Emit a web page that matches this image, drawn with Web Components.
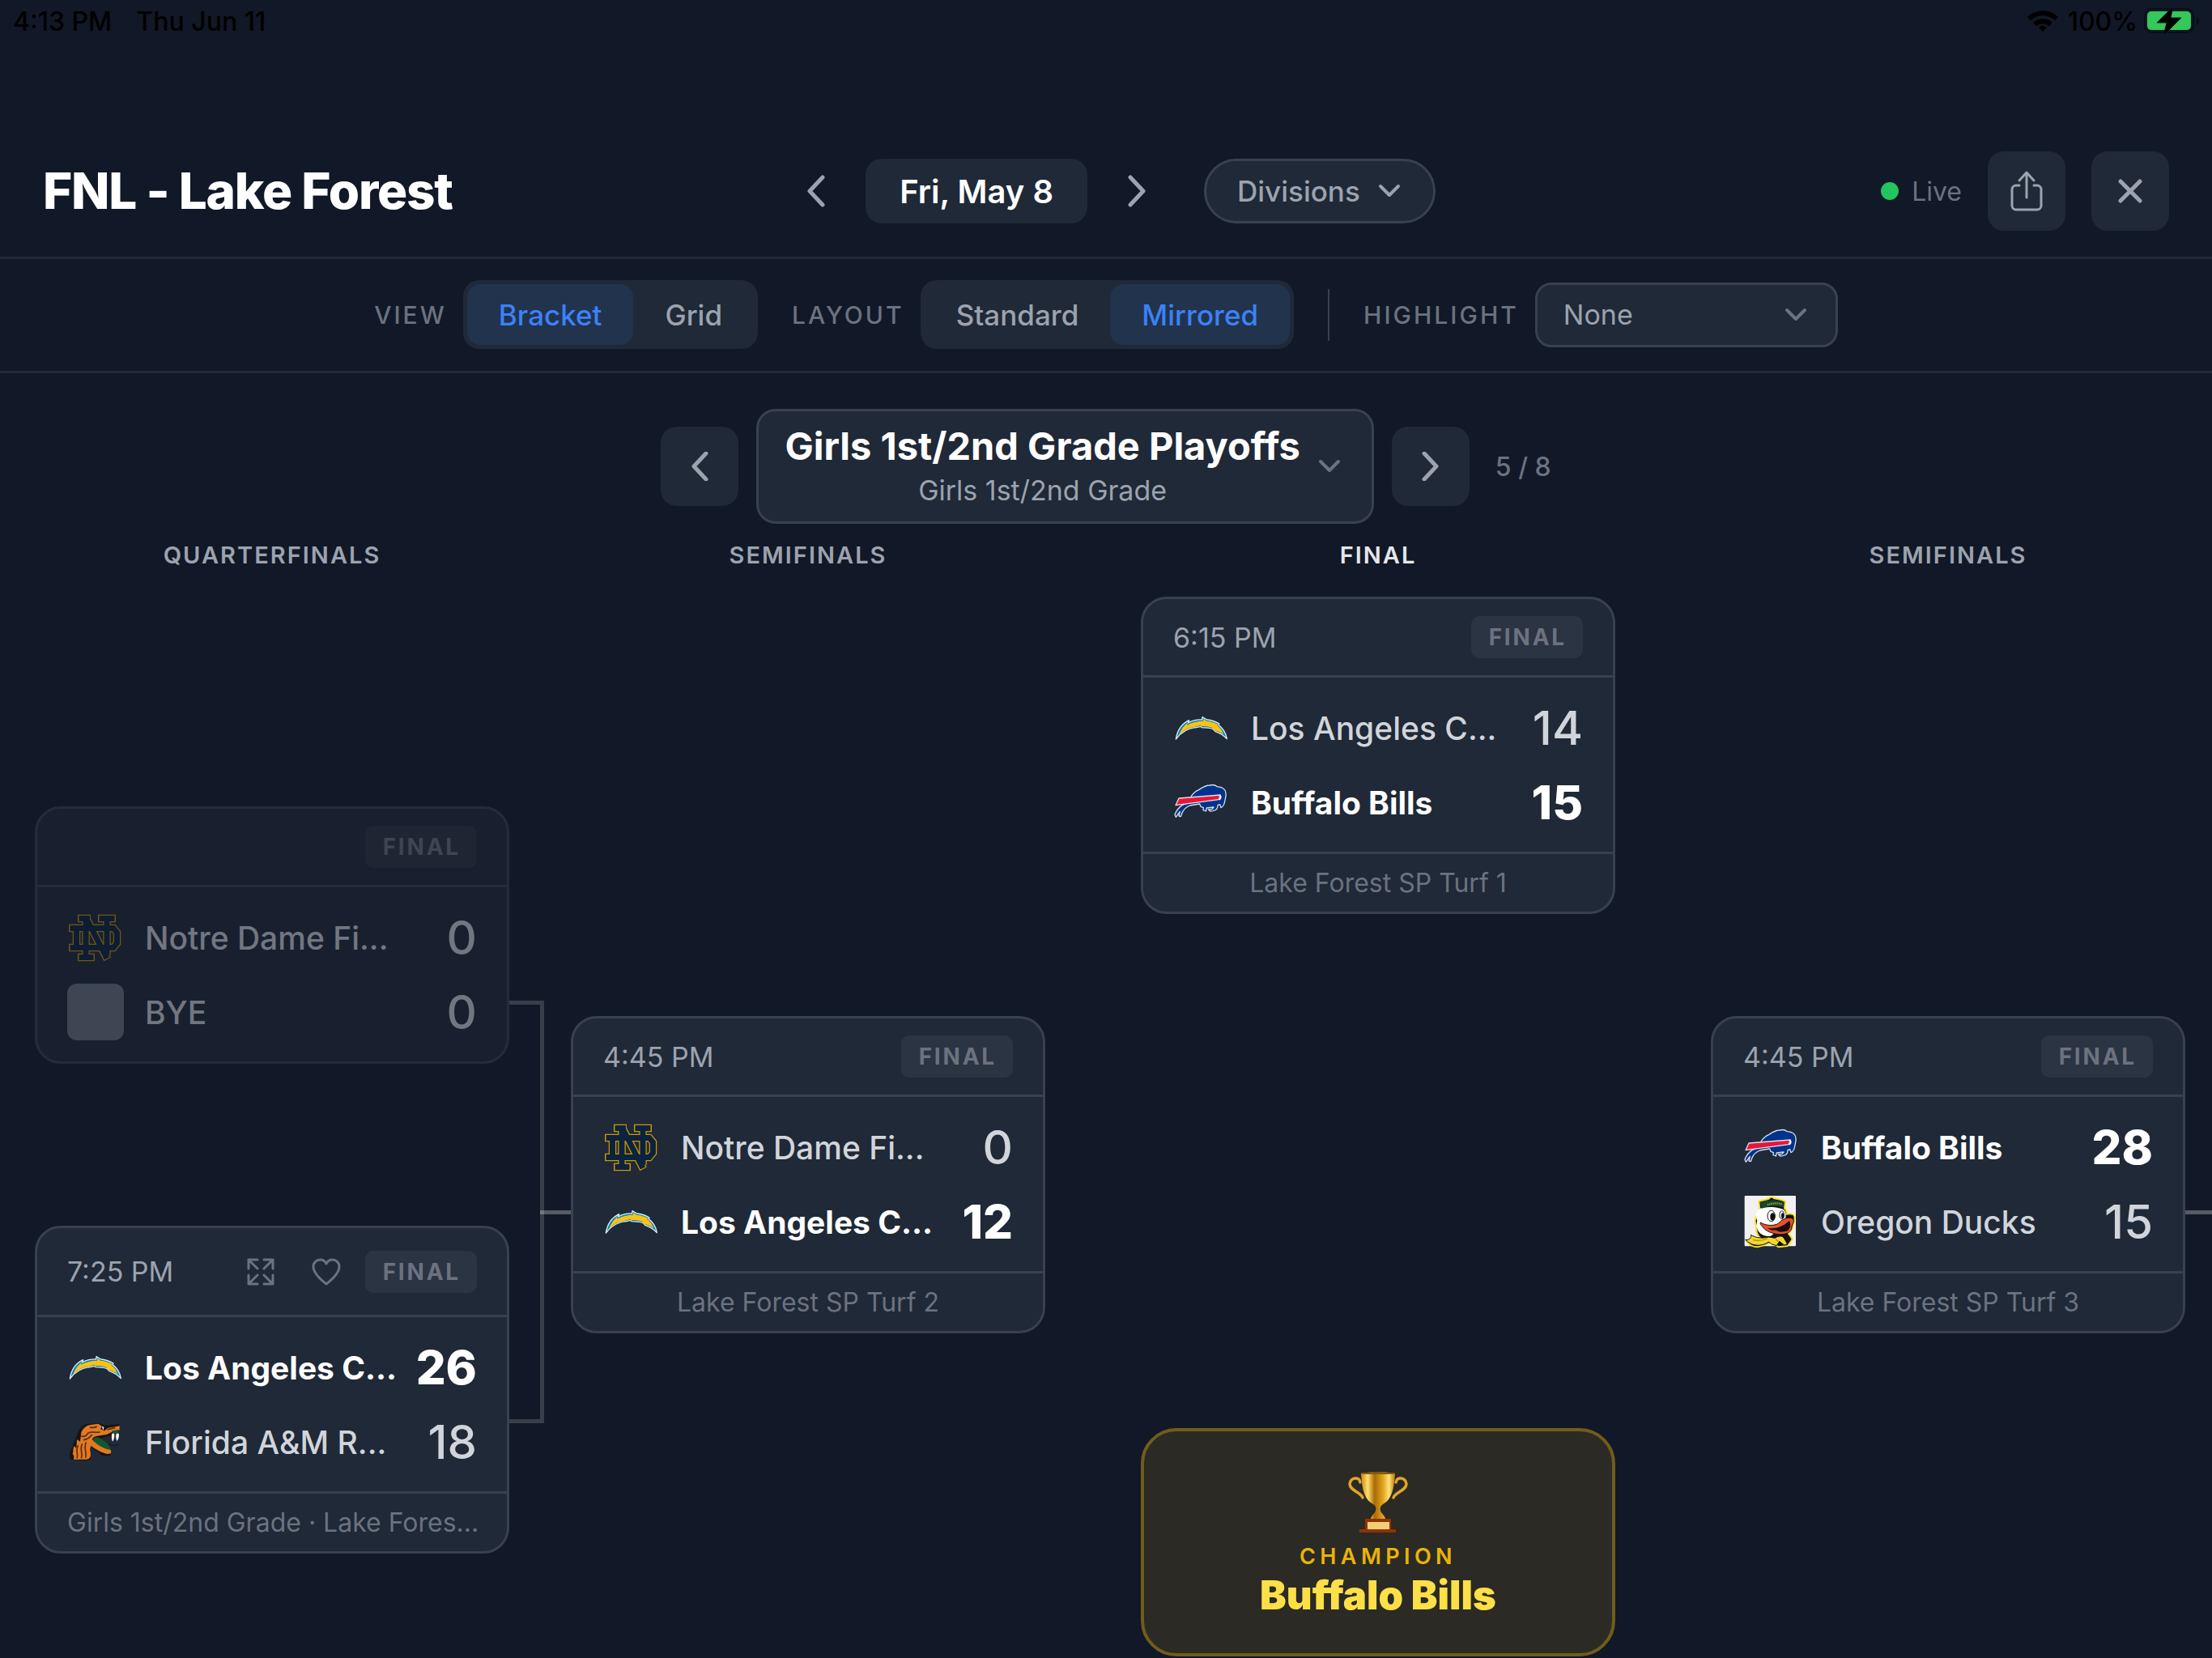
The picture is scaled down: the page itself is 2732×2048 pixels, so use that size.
<!DOCTYPE html>
<html lang="en">
<head>
<meta charset="utf-8">
<title>FNL - Lake Forest</title>
<style>
  body {
    margin: 0;
    background: #111827;
    color: #fff;
    font-family: Inter, "Liberation Sans", sans-serif;
    overflow-x: hidden;
  }
</style>
</head>
<body>
<score-board></score-board>

<script>
const icons = {
  left: `<svg viewBox="0 0 24 40" width="24" height="40"><path d="M20 3 4 20l16 17" stroke-width="5"/></svg>`,
  right: `<svg viewBox="0 0 24 40" width="24" height="40"><path d="m4 3 16 17L4 37" stroke-width="5"/></svg>`,
  leftSmall: `<svg viewBox="0 0 24 36" width="24" height="36"><path d="M20 2 5 18l15 16" stroke-width="5"/></svg>`,
  rightSmall: `<svg viewBox="0 0 24 36" width="24" height="36"><path d="m4 2 15 16L4 34" stroke-width="5"/></svg>`,
  down: `<svg viewBox="0 0 28 18" width="28" height="18"><path d="m3 3 11 11L25 3" stroke-width="4"/></svg>`,
  share: `<svg viewBox="0 0 40 50" width="40" height="50"><path d="M20 33V3M11 12l9-10 9 10M11 18H7a5 5 0 0 0-5 5v20a5 5 0 0 0 5 5h26a5 5 0 0 0 5-5V23a5 5 0 0 0-5-5h-4" stroke-width="3"/></svg>`,
  close: `<svg viewBox="0 0 30 30" width="30" height="30"><path d="m3 3 24 24M27 3 3 27" stroke-width="5"/></svg>`,
  expand: `<svg viewBox="0 0 34 34" width="34" height="34"><path d="M2 13V2h11M2 2l11 11M21 2h11v11M32 2 21 13M2 21v11h11M2 32l11-11M32 21v11H21M32 32 21 21" stroke-width="3"/></svg>`,
  heart: `<svg viewBox="0 0 36 34" width="36" height="34"><path d="M18 32C9 25 2 18 2 10.500 2 5.500 6 2 10.500 2c3 0 6 2 7.500 5 1.500-3 4.500-5 7.500-5C30 2 34 5.500 34 10.500 34 18 27 25 18 32z" stroke-width="3"/></svg>`,
};

const logos = {
  chargers: `<svg viewBox="0 0 210 210" width="70" height="70">
    <path d="M10 147C15 114 31 90 59 77l-4 10c16-9 32-13 52-12l1-10 17 10c18 1 32 7 46 15l-3 5c17 12 27 28 31 51-12-13-26-22-44-28l-7-8c-14-5-26-6-43-6l-3-4c-12 2-19 6-21 4-28 3-51 17-71 43z" fill="#0080c6" stroke="#dfe9ef" stroke-width="4" stroke-linejoin="round"/>
    <path d="M20 134C28 112 40 96 53 86l-2 9C70 84 90 80 111 80l2-9 10 9c18 1 30 6 44 13l-4 4c12 9 19 19 24 33-11-9-22-13-36-17l-5-8c-14-5-27-6-42-6l-2-4-20 6C60 103 38 112 20 134z" fill="#ffc20e"/></svg>`,
  bills: `<svg viewBox="0 0 210 210" width="70" height="70">
    <path d="M66 84c8-12 16-20 29-25 14-10 24-17 40-17 12-3 20-2 28 5 17 1 30 8 32 24 2 12-3 22-4 31-2 12-7 20-14 23l-4-12-8 3c1 12-5 19-18 21l-10 1-7-6 14-2 6-7-26 3-3 12-10-4 1-9-10-4-4-10-36 6c-13 5-22 13-28 25l-6 16-7-2 4-17-15 21-4-9c5-15 13-26 28-36l22-8z" fill="#00338d" stroke="#d8dde6" stroke-width="4" stroke-linejoin="round"/>
    <path d="M21 90 174 78l-5 17L9 116z" fill="#e31837" stroke="#e6dfe9" stroke-width="4" stroke-linejoin="round"/>
    <path d="M172 79c7 3 5 11-1 17" fill="none" stroke="#fff" stroke-width="5"/></svg>`,
  irish: `<svg viewBox="-3 -7 70 70" width="70" height="70" fill="none">
    <g stroke="#c99700" stroke-width="9.500"><path d="M10 4.500H26M20 2V55M10 52.500H31M19.500 2 46.500 55M46 2V50M35 4.500H57M-1 16.500H54L58.500 22V35L54 40.500H-1M8.500 16V41"/></g>
    <g stroke="#0c2340" stroke-width="7"><path d="M11.500 4.500H25M20 2V54M11.500 52.500H29.500M20 3 46 54M46 2V50M36.500 4.500H55.500M.5 16.500H54L58.500 22V35L54 40.500H.5M8.500 16V41"/></g></svg>`,
  rattlers: `<svg viewBox="0 0 210 210" width="70" height="70">
    <path d="M10 170c-2-16 0-34 10-48l14-36c4-16 14-36 34-46l50-4 22 8 54-4v24l-34 18-60 16 66 46-6 12-30 0-44-36 2 50-24 4z" fill="#191310"/>
    <path d="M20 150c4-10 0-20 6-30l8 10 2-34 12 8 4-34c6-14 18-26 34-28l28-4 14 8-4 12 14 6 12-10 44-8v16l-18 2-30 14-38 6c-12 4-16 8-14 14l68 38 1 12-12 2c-24-4-44-16-62-30-10 14 2 26-4 42-6 10-18 8-30 8H24c0-8 4-12-4-20z" fill="#e07a23"/>
    <path d="M36 166c6-16-6-28 4-48M52 166c8-20-8-32 4-54M68 164c6-20-8-34 2-58M52 84c14 4 20-4 26-12 16-8 26 2 44-4M60 98c16-2 24-8 32-20M84 50c8 4 18 2 26-2M148 60l30-8" fill="none" stroke="#5b2c10" stroke-width="5"/>
    <path d="M94 98c10-16 24-10 34-2 14 10 30 16 32 38-22-2-50-18-66-36zM166 64l24-4v14l-22 2z" fill="#14572f"/>
    <path d="M166 74h8c2 12 0 22-6 30-4-10-4-20-2-30zM182 74h9c2 12-1 22-7 28-4-10-4-18-2-28zM128 48l8 2-2 12z" fill="#fff"/>
    <path d="M150 112c14 8 26 8 40 2" fill="none" stroke="#191310" stroke-width="3"/></svg>`,
  ducks: `<svg viewBox="0 0 210 210" width="70" height="70">
    <rect x="5" y="9" width="190" height="187" rx="3" fill="#f1f1f1"/>
    <path d="M58 30c16-6 28-6 38-10 2-6 14-8 18-1 12 2 30 4 42 12l-3 24c8 6 9 13 8 22 14-2 26-2 29 8 3 12-1 22-5 30 0 16-6 26-18 32 3 8 10 10 15 24l-17 24-34 4-25-16-52 16c-20 0-32-8-41-22 14 2 20-2 14-14 16 8 22 8 36 2-14-12-16-26-14-42-10-22-4-40 14-48z" fill="#111" stroke="#f7e11e" stroke-width="6" stroke-linejoin="round"/>
    <path d="M60 58c20-10 70-10 92 4 8 12 6 24 4 38-10 16-36 48-54 58-24 4-46-8-52-32-2-10 0-16 2-24-8-18-4-34 8-44z" fill="#fff"/>
    <path d="M62 33c28-10 60-10 89 0l-3 19c-25-8-51-6-79 4z" fill="#154733"/>
    <path d="M90 42c16-5 36-6 54-2" fill="none" stroke="#b8a832" stroke-width="6" stroke-dasharray="4 3"/>
    <ellipse cx="104" cy="84" rx="14" ry="20" fill="#fff" stroke="#111" stroke-width="3"/>
    <ellipse cx="109" cy="87" rx="9" ry="14" fill="#111"/>
    <ellipse cx="143" cy="80" rx="8" ry="15" fill="#fff" stroke="#111" stroke-width="3"/>
    <ellipse cx="146" cy="83" rx="5" ry="10" fill="#111"/>
    <path d="M64 108c18 12 48 14 66 4 18-22 46-26 56-16 4 12-4 18-6 28 0 20-20 28-40 28-28 0-56-10-70-30-4-4-8-8-6-14z" fill="#e8502a" stroke="#111" stroke-width="3"/>
    <path d="M88 128c30 6 60-4 82-26 8 8 6 26-4 36-22 10-58 4-78-10z" fill="#1a0b08"/>
    <path d="M104 138c14-6 24 0 32 6-12 2-22-2-32-6z" fill="#d2402a"/>
    <path d="M8 172c18 2 24-10 20-18 20 12 44 14 66 8l24 4c12-8 24-10 32-2l14 24-12 4-18-14-10 16-20-6-8-8c-28 18-64 18-88-8z" fill="#f3d72c" stroke="#111" stroke-width="3" stroke-linejoin="round"/>
    <path d="M36 172c18 6 38 2 54-4M120 170l10 8" fill="none" stroke="#a58d12" stroke-width="4"/></svg>`,
  none: `<svg viewBox="0 0 70 70" width="70" height="70"><rect width="70" height="70" rx="12" fill="#6b7280"/></svg>`,
};

const base = `
  *, *::before, *::after { box-sizing: border-box; }
  button, select { font: inherit; color: inherit; border: 0; margin: 0; padding: 0; background: none; }
  svg { display: block; flex: none; }
  .icon svg { fill: none; stroke: currentColor; stroke-linecap: round; stroke-linejoin: round; }
`;

class BaseElement extends HTMLElement {
  constructor() {
    super();
    this.attachShadow({ mode: "open" });
  }

  connectedCallback() {
    this.shadowRoot.innerHTML = `<style>${base}${this.styles()}</style>${this.render()}`;
  }

  attr(name) {
    return this.getAttribute(name) || "";
  }
}

customElements.define("status-bar", class extends BaseElement {
  styles() {
    return `
      :host { display: flex; align-items: center; height: 52px; padding: 0 14px 0 16px; color: #000; font-size: 32px; font-weight: 500; }
      .date { margin-left: 30px; }
      .wifi { margin: 0 12px 0 auto; }
      .battery { margin-left: 8px; }
    `;
  }

  render() {
    return `
      <span>4:13 PM</span><span class="date">Thu Jun 11</span>
      <svg class="wifi" viewBox="0 0 38 28" width="38" height="28" fill="none" stroke="#000" stroke-width="6">
        <path d="M2 11c10-9 24-9 34 0M9 18c6-5 14-5 20 0"/><path d="m19 27-5-5c3-3 7-3 10 0z" fill="#000" stroke="none"/></svg>
      <span>100%</span>
      <svg class="battery" viewBox="0 0 70 34" width="70" height="34">
        <rect x="1" y="2" width="60" height="29" rx="9" fill="none" stroke="#0a0e17" stroke-width="2"/>
        <path d="M65 12c4 2 4 8 0 10z" fill="#0a0e17"/>
        <rect x="4" y="5" width="54" height="23" rx="5" fill="#34c759"/>
        <path d="M36-1 16 19h12l-4 16 22-22H33z" fill="#000" stroke="#111827" stroke-width="1"/></svg>
    `;
  }
});

customElements.define("board-header", class extends BaseElement {
  styles() {
    return `
      :host {
        display: grid; grid-template-columns: 1fr auto 1fr; align-items: center;
        padding: 135px 53px 32px; border-bottom: 3px solid #1f2937;
      }
      h1 { margin: 0; font-size: 62px; line-height: 72px; font-weight: 800; letter-spacing: -0.02em; }
      nav, .tools { display: flex; align-items: center; color: #9ca3af; }
      nav { gap: 12px; }
      .tools { gap: 32px; justify-content: flex-end; }
      .step { width: 98px; height: 80px; display: grid; place-items: center; }
      .date { height: 80px; padding: 0 42px; border-radius: 20px; background: #1f2937; color: #fff; font-size: 40px; font-weight: 600; }
      .divisions {
        display: flex; align-items: center; gap: 22px; height: 80px; margin-left: 22px; padding: 0 40px 0 38px;
        border: 3px solid #374151; border-radius: 40px; background: #1f2937; font-size: 35px; font-weight: 500;
      }
      .live { display: flex; align-items: center; gap: 16px; color: #6b7280; font-size: 32px; }
      .live::before { content: ""; width: 22px; height: 22px; border-radius: 50%; background: #22c55e; }
      .tool { width: 96px; height: 98px; display: grid; place-items: center; border-radius: 20px; background: #1f2937; }
    `;
  }

  render() {
    return `
      <h1>FNL - Lake Forest</h1>
      <nav>
        <button class="step icon" aria-label="Previous day">${icons.left}</button>
        <button class="date">Fri, May 8</button>
        <button class="step icon" aria-label="Next day">${icons.right}</button>
        <button class="divisions icon">Divisions ${icons.down}</button>
      </nav>
      <div class="tools">
        <span class="live">Live</span>
        <button class="tool icon" aria-label="Share">${icons.share}</button>
        <button class="tool icon" aria-label="Close">${icons.close}</button>
      </div>
    `;
  }
});

customElements.define("segmented-control", class extends BaseElement {
  styles() {
    return `
      :host { display: flex; align-items: center; gap: 20px; }
      .label { color: #6b7280; font-size: 30px; font-weight: 500; letter-spacing: 0.1em; }
      .group { display: flex; padding: 5px; border-radius: 20px; background: #1f2937; }
      button { height: 75px; padding: 0 39px; border-radius: 16px; color: #9ca3af; font-size: 35px; font-weight: 500; }
      button[aria-pressed="true"] { background: #22334e; color: #3b82f6; }
    `;
  }

  render() {
    const buttons = this.attr("options").split(",").map((option) =>
      `<button aria-pressed="${option === this.attr("value")}">${option}</button>`);
    return `<span class="label" id="label">${this.attr("label")}</span>
      <div class="group" role="group" aria-labelledby="label">${buttons.join("")}</div>`;
  }
});

customElements.define("board-toolbar", class extends BaseElement {
  styles() {
    return `
      :host {
        display: flex; align-items: center; justify-content: center; gap: 42px;
        padding: 26px 0 27px; border-bottom: 3px solid #1f2937;
      }
      .divider { width: 2px; height: 64px; background: #374151; }
      .highlight { display: flex; align-items: center; gap: 20px; }
      label { color: #6b7280; font-size: 30px; font-weight: 500; letter-spacing: 0.1em; }
      .field { display: grid; align-items: center; width: 374px; color: #6b7280; }
      .field > * { grid-area: 1 / 1; }
      select {
        appearance: none; height: 80px; padding: 0 32px; border: 3px solid #374151; border-radius: 20px;
        background: #1f2937; color: #9ca3af; font-size: 34px;
      }
      svg { justify-self: end; margin-right: 38px; pointer-events: none; }
    `;
  }

  render() {
    return `
      <segmented-control label="VIEW" options="Bracket,Grid" value="Bracket"></segmented-control>
      <segmented-control label="LAYOUT" options="Standard,Mirrored" value="Mirrored"></segmented-control>
      <div class="divider"></div>
      <div class="highlight">
        <label for="team">HIGHLIGHT</label>
        <div class="field icon"><select id="team"><option>None</option></select>${icons.down}</div>
      </div>
    `;
  }
});

customElements.define("division-picker", class extends BaseElement {
  styles() {
    return `
      :host { display: flex; align-items: center; justify-content: center; gap: 22px; padding-top: 44px; color: #9ca3af; }
      .step { width: 96px; height: 98px; display: grid; place-items: center; border-radius: 20px; background: #1f2937; }
      .current {
        display: flex; align-items: center; gap: 22px; height: 142px; padding: 0 38px 0 32px;
        border: 3px solid #374151; border-radius: 24px; background: #1f2937; color: #6b7280;
      }
      .names { display: grid; justify-items: center; }
      .title { color: #fff; font-size: 47px; line-height: 60px; font-weight: 700; }
      .sub { color: #9ca3af; font-size: 34px; line-height: 50px; }
      .count { margin-left: 10px; color: #6b7280; font-size: 32px; font-weight: 500; }
    `;
  }

  render() {
    return `
      <button class="step icon" aria-label="Previous bracket">${icons.leftSmall}</button>
      <button class="current icon">
        <span class="names"><span class="title">Girls 1st/2nd Grade Playoffs</span><span class="sub">Girls 1st/2nd Grade</span></span>
        ${icons.down}
      </button>
      <button class="step icon" aria-label="Next bracket">${icons.rightSmall}</button>
      <span class="count">5 / 8</span>
    `;
  }
});

customElements.define("team-row", class extends BaseElement {
  styles() {
    return `
      :host { display: flex; align-items: center; height: 70px; color: #d1d5db; font-size: 39px; font-weight: 500; }
      :host([winner]) { color: #fff; font-weight: 700; }
      .name { flex: 1; margin-left: 26px; white-space: nowrap; }
      .score { font-size: 58px; }
      :host([winner]) .score { font-weight: 800; }
    `;
  }

  render() {
    return `${logos[this.attr("logo")]}
      <span class="name">${this.attr("name")}</span><span class="score">${this.attr("score")}</span>`;
  }
});

customElements.define("game-card", class extends BaseElement {
  styles() {
    return `
      :host {
        display: block; border: 3px solid #374151; border-radius: 32px; background: #1f2937; color: #6b7280;
      }
      :host([dim]) { opacity: 0.5; }
      header { display: flex; align-items: center; gap: 30px; height: 97px; padding: 0 37px; border-bottom: 3px solid #374151; }
      :host([actions]) header { height: 110px; }
      .time { margin-right: auto; color: #9ca3af; font-size: 34px; }
      .actions { display: flex; gap: 46px; }
      .badge { padding: 0 20px 0 22px; border-radius: 10px; background: #2b3442; font-size: 28px; line-height: 52px; font-weight: 700; letter-spacing: 0.1em; }
      .teams { display: grid; gap: 22px; padding: 27px 37px 26px; }
      footer { border-top: 3px solid #374151; padding: 0 37px; font-size: 32px; line-height: 71px; text-align: center; white-space: nowrap; }
    `;
  }

  render() {
    const actions = `<div class="actions">
      <button class="icon" aria-label="Expand">${icons.expand}</button>
      <button class="icon" aria-label="Favorite">${icons.heart}</button></div>`;
    return `
      <header><span class="time">${this.attr("time")}</span>${this.hasAttribute("actions") ? actions : ""}<span class="badge">FINAL</span></header>
      <div class="teams"><slot></slot></div>
      ${this.hasAttribute("venue") ? `<footer>${this.attr("venue")}</footer>` : ""}
    `;
  }
});

customElements.define("champion-card", class extends BaseElement {
  styles() {
    return `
      :host {
        display: flex; flex-direction: column; align-items: center; padding: 50px 0 40px;
        border: 4px solid #715c1b; border-radius: 44px; background: #2b2a24;
      }
      .label { margin-top: 12px; color: #eab308; font-size: 27px; line-height: 34px; font-weight: 600; letter-spacing: 0.2em; }
      .name { color: #fde047; font-size: 49px; line-height: 62px; font-weight: 900; }
    `;
  }

  render() {
    return `
      <svg viewBox="0 0 74 76" width="74" height="76">
        <defs>
          <linearGradient id="gold"><stop offset="0" stop-color="#c98a10"/><stop offset=".2" stop-color="#ffdf6b"/><stop offset=".4" stop-color="#a86a05"/><stop offset=".65" stop-color="#e3a51c"/><stop offset=".82" stop-color="#ffe27a"/><stop offset="1" stop-color="#b97a0a"/></linearGradient>
        </defs>
        <g fill="none" stroke="#e0a52b" stroke-width="3.500" stroke-linecap="round">
          <path d="M15 13C14 5 3 7 2 15c0 8 15 11 16 17"/><path d="M59 13c1-8 12-6 13 2 0 8-15 11-16 17"/>
        </g>
        <path d="M16 2c3-2 39-2 42 0-1 16-3 32-15 38-3 2-4 5-3 8 1 4 5 5 6 10H28c1-5 5-6 6-10 1-3 0-6-3-8C19 34 17 18 16 2z" fill="url(#gold)"/>
        <path d="M17 2h40" stroke="#8a5704" stroke-width="2"/>
        <path d="M21 58h32v13h6v4H14v-4h7z" fill="#8f3205"/><path d="M24 62h27v9H24z" fill="#f2cf76"/>
      </svg>
      <span class="label">CHAMPION</span>
      <span class="name">${this.attr("name")}</span>
    `;
  }
});

// Joins two games of one round to the game that follows
customElements.define("bracket-link", class extends BaseElement {
  styles() {
    return `
      :host { display: grid; grid-template-columns: 38px 5px 33px; align-items: center; }
      .fork { grid-area: 1 / 1 / 2 / 3; align-self: stretch; border: 5px solid rgba(255, 255, 255, 0.17); border-left: 0; }
      .stem { grid-area: 1 / 2 / 2 / 4; height: 5px; background: rgba(255, 255, 255, 0.29); }
      :host([stub]) { grid-template-columns: 1fr; align-items: start; }
      :host([stub]) .fork { display: none; }
      :host([stub]) .stem { grid-area: 1 / 1; }
    `;
  }

  render() {
    return `<div class="fork"></div><div class="stem"></div>`;
  }
});

customElements.define("bracket-view", class extends BaseElement {
  styles() {
    return `
      :host {
        display: grid; grid-template-columns: 586px 76px 586px 118px 586px 118px 586px 1fr;
        grid-template-rows: 90px repeat(4, 259px) 273px; align-items: start; padding-left: 43px;
      }
      h2 { margin: 0; padding-top: 21px; color: #9ca3af; font-size: 29px; line-height: 36px; font-weight: 600; letter-spacing: 0.07em; text-align: center; grid-row: 1; }
      .main { color: #e5e7eb; }
      .c1 { grid-column: 1; }
      .c2 { grid-column: 3; }
      .c3 { grid-column: 5; }
      .c4 { grid-column: 7; }
      .r1 { grid-row: 2 / span 2; }
      .r2 { grid-row: 3 / span 2; }
      .r3 { grid-row: 4 / span 2; }
      .r4 { grid-row: 5 / span 2; }
      .champion { grid-row: 5 / span 2; align-self: end; }
      .join { grid-area: 3 / 2 / span 3 / 3; height: 522px; margin-top: 240px; }
      .tail { grid-area: 4 / 8; margin-top: 240px; }
    `;
  }

  render() {
    return `
      <h2 class="c1">QUARTERFINALS</h2>
      <h2 class="c2">SEMIFINALS</h2>
      <h2 class="c3 main">FINAL</h2>
      <h2 class="c4">SEMIFINALS</h2>
      <game-card class="c1 r2" dim>
        <team-row logo="irish" name="Notre Dame Fi..." score="0"></team-row>
        <team-row logo="none" name="BYE" score="0"></team-row>
      </game-card>
      <game-card class="c1 r4" time="7:25 PM" actions venue="Girls 1st/2nd Grade · Lake Fores...">
        <team-row logo="chargers" name="Los Angeles C..." score="26" winner></team-row>
        <team-row logo="rattlers" name="Florida A&amp;M R..." score="18"></team-row>
      </game-card>
      <bracket-link class="join"></bracket-link>
      <game-card class="c2 r3" time="4:45 PM" venue="Lake Forest SP Turf 2">
        <team-row logo="irish" name="Notre Dame Fi..." score="0"></team-row>
        <team-row logo="chargers" name="Los Angeles C..." score="12" winner></team-row>
      </game-card>
      <game-card class="c3 r1" time="6:15 PM" venue="Lake Forest SP Turf 1">
        <team-row logo="chargers" name="Los Angeles C..." score="14"></team-row>
        <team-row logo="bills" name="Buffalo Bills" score="15" winner></team-row>
      </game-card>
      <champion-card class="c3 champion" name="Buffalo Bills"></champion-card>
      <game-card class="c4 r3" time="4:45 PM" venue="Lake Forest SP Turf 3">
        <team-row logo="bills" name="Buffalo Bills" score="28" winner></team-row>
        <team-row logo="ducks" name="Oregon Ducks" score="15"></team-row>
      </game-card>
      <bracket-link class="tail" stub></bracket-link>
    `;
  }
});

customElements.define("score-board", class extends BaseElement {
  styles() {
    return `:host { display: block; }`;
  }

  render() {
    return `
      <status-bar></status-bar>
      <board-header></board-header>
      <board-toolbar></board-toolbar>
      <division-picker></division-picker>
      <bracket-view></bracket-view>
    `;
  }
});
</script>
</body>
</html>
